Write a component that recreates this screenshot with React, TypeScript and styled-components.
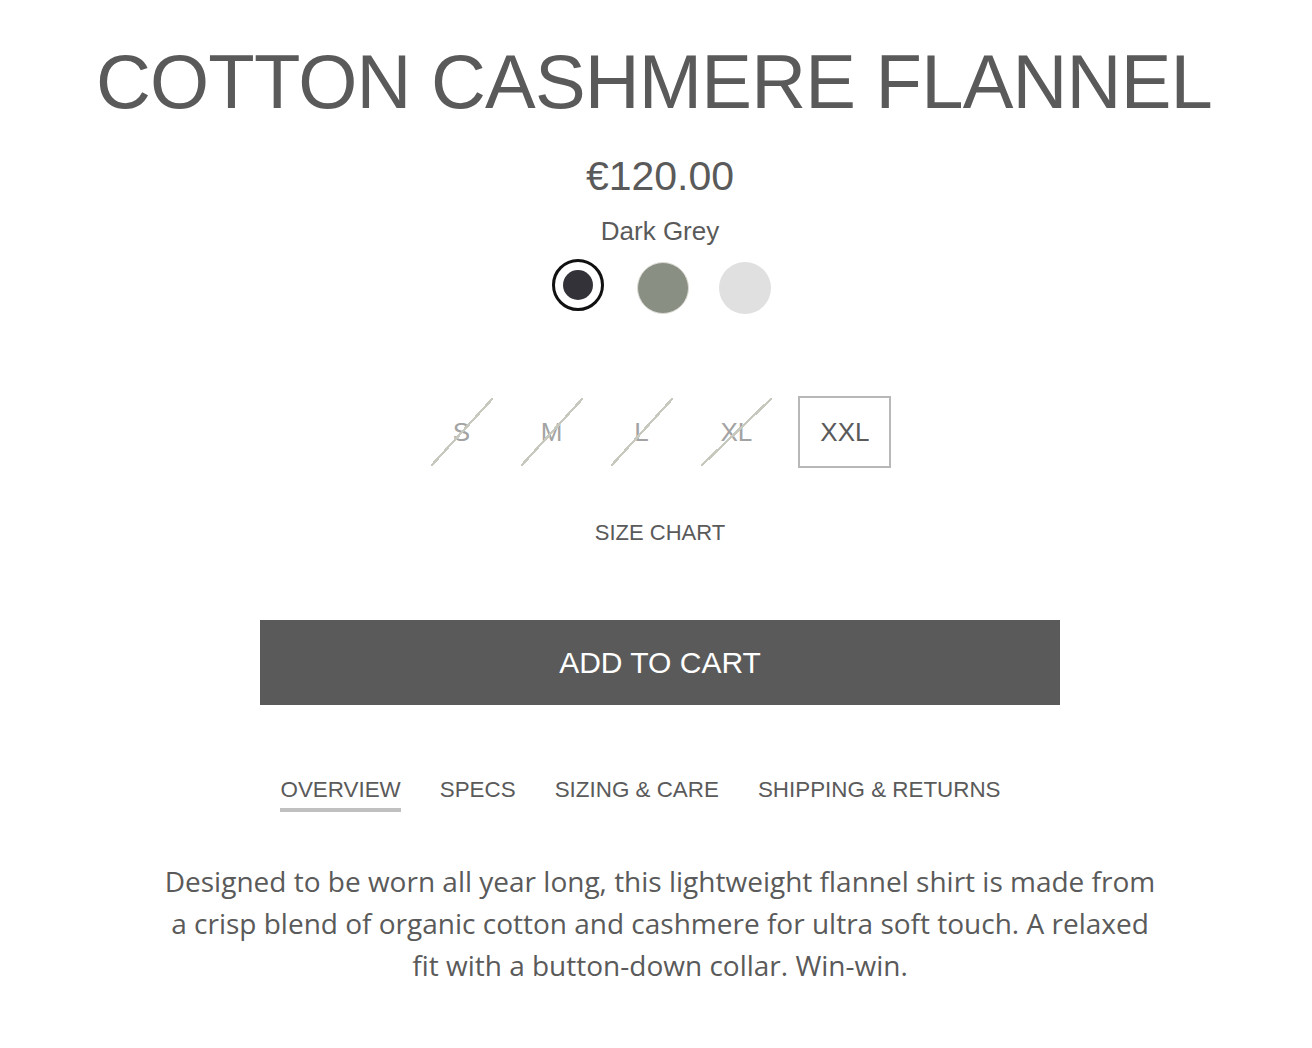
import { useState } from "react";
import styled, { createGlobalStyle } from "styled-components";

const GlobalStyle = createGlobalStyle`
  html, body {
    margin: 0;
    padding: 0;
    background: #ffffff;
  }
  body {
    font-family: "Liberation Sans", Arial, sans-serif;
    color: #5a5a5a;
  }
`;

type Swatch = { name: string; color: string; ring?: string };

const swatches: Swatch[] = [
  { name: "Dark Grey", color: "#333238" },
  { name: "Sage", color: "#8a8f84", ring: "#dcdcd6" },
  { name: "Light Grey", color: "#e0e0e0" },
];

const sizes = [
  { label: "S", available: false },
  { label: "M", available: false },
  { label: "L", available: false },
  { label: "XL", available: false },
  { label: "XXL", available: true },
];

const tabs = ["OVERVIEW", "SPECS", "SIZING & CARE", "SHIPPING & RETURNS"];

const App = () => {
  const [colour, setColour] = useState(0);
  const [tab, setTab] = useState(0);

  return (
    <>
      <GlobalStyle />
      <Page>
        <Title>COTTON CASHMERE FLANNEL</Title>
        <Price>€120.00</Price>
        <ColourName>{swatches[colour].name}</ColourName>

        <SwatchRow>
          {swatches.map((s, i) => (
            <SwatchButton
              key={s.name}
              $selected={i === colour}
              aria-label={s.name}
              onClick={() => setColour(i)}
            >
              <SwatchDot $color={s.color} $ring={s.ring} $selected={i === colour} />
            </SwatchButton>
          ))}
        </SwatchRow>

        <SizeRow>
          {sizes.map((s) => (
            <SizeButton key={s.label} $available={s.available}>
              {s.label}
            </SizeButton>
          ))}
        </SizeRow>

        <SizeChart>SIZE CHART</SizeChart>

        <CartButton>ADD TO CART</CartButton>

        <Tabs>
          {tabs.map((t, i) => (
            <Tab key={t} $active={i === tab} onClick={() => setTab(i)}>
              <span>{t}</span>
            </Tab>
          ))}
        </Tabs>

        <Description>
          Designed to be worn all year long, this lightweight flannel shirt is made from
          <br />
          a crisp blend of organic cotton and cashmere for ultra soft touch. A relaxed
          <br />
          fit with a button-down collar. Win-win.
        </Description>
      </Page>
    </>
  );
};

const Page = styled.div`
  width: 1312px;
  box-sizing: border-box;
  padding: 36px 0 40px 8px;
  display: flex;
  flex-direction: column;
  align-items: center;
`;

const Title = styled.h1`
  margin: 0;
  padding-right: 12px;
  font-size: 76px;
  font-weight: 400;
  line-height: 92px;
  letter-spacing: -0.8px;
  color: #5a5a5a;
  white-space: nowrap;
`;

const Price = styled.div`
  margin-top: 25px;
  font-size: 41px;
  line-height: 46px;
  color: #5a5a5a;
`;

const ColourName = styled.div`
  margin-top: 15px;
  font-size: 26px;
  line-height: 34px;
  color: #5a5a5a;
`;

const SwatchRow = styled.div`
  margin-top: 11px;
  display: flex;
  gap: 30px;
`;

const SwatchButton = styled.button<{ $selected: boolean }>`
  width: 52px;
  height: 52px;
  padding: 0;
  border-radius: 50%;
  border: 3px solid ${({ $selected }) => ($selected ? "#111111" : "transparent")};
  background: #ffffff;
  display: grid;
  place-items: center;
  cursor: pointer;
  box-sizing: border-box;
`;

const SwatchDot = styled.span<{ $color: string; $ring?: string; $selected: boolean }>`
  display: block;
  width: ${({ $selected }) => ($selected ? "30px" : "52px")};
  height: ${({ $selected }) => ($selected ? "30px" : "52px")};
  border-radius: 50%;
  background: ${({ $color }) => $color};
  box-sizing: border-box;
  border: ${({ $ring }) => ($ring ? `1.5px solid ${$ring}` : "none")};
`;

const SizeRow = styled.div`
  margin-top: 85px;
  display: flex;
  gap: 24px;
`;

const SizeButton = styled.button<{ $available: boolean }>`
  position: relative;
  min-width: 66px;
  height: 72px;
  padding: 0 20px;
  box-sizing: border-box;
  font-family: "Liberation Sans", Arial, sans-serif;
  font-size: 26px;
  color: ${({ $available }) => ($available ? "#5a5a5a" : "#a3a3a3")};
  background: #ffffff;
  border: 2px solid ${({ $available }) => ($available ? "#b8b8b8" : "transparent")};
  cursor: pointer;

  &::after {
    content: "";
    display: ${({ $available }) => ($available ? "none" : "block")};
    position: absolute;
    inset: 0;
    pointer-events: none;
    background: linear-gradient(
      to bottom right,
      transparent calc(50% - 1.2px),
      #c8c9be calc(50% - 1.2px),
      #c8c9be calc(50% + 1.2px),
      transparent calc(50% + 1.2px)
    );
  }
`;

const SizeChart = styled.div`
  margin-top: 52px;
  font-size: 22px;
  line-height: 26px;
  color: #5a5a5a;
  cursor: pointer;
`;

const CartButton = styled.button`
  margin-top: 74px;
  width: 800px;
  height: 85px;
  border: 0;
  background: #5a5a5a;
  color: #ffffff;
  font-family: "Liberation Sans", Arial, sans-serif;
  font-size: 30px;
  cursor: pointer;
`;

const Tabs = styled.div`
  margin-top: 72px;
  display: flex;
`;

const Tab = styled.div<{ $active: boolean }>`
  padding-right: 39px;
  font-size: 22.4px;
  line-height: 26px;
  color: #5a5a5a;
  cursor: pointer;

  span {
    display: inline-block;
    padding-bottom: 5px;
    border-bottom: 4px solid ${({ $active }) => ($active ? "#c0c0c0" : "transparent")};
  }
`;

const Description = styled.p`
  margin: 48px 0 0;
  width: 1000px;
  text-align: center;
  font-family: "Open Sans", "Liberation Sans", sans-serif;
  font-size: 28px;
  line-height: 42px;
  color: #5a5a5a;
`;

export default App;
